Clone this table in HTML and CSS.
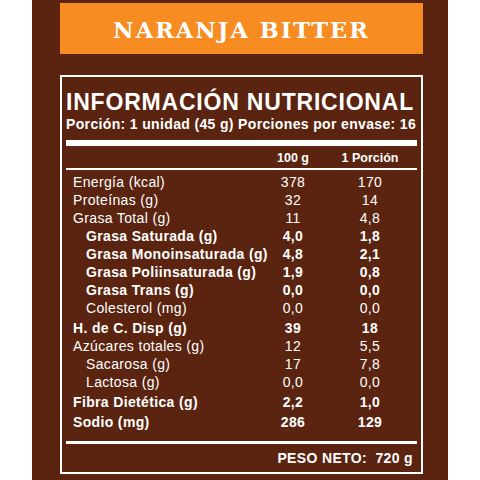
FILE: index.html
```html
<!DOCTYPE html>
<html lang="es">
<head>
  <meta charset="UTF-8">
  <title>Naranja Bitter - Información Nutricional</title>
  <link rel="stylesheet" href="styles.css">
</head>
<body>
<div class="panel">
  <div class="flavor">NARANJA BITTER</div>
  <div class="facts">
    <h1 class="facts-title">INFORMACIÓN NUTRICIONAL</h1>
    <p class="serving">Porción: 1 unidad (45 g) Porciones por envase: 16</p>
    <div class="bar-thick"></div>
    <div class="row head">
      <span></span><span class="val">100 g</span><span class="val">1 Porción</span>
    </div>
    <div class="rows">
      <div class="row"><span class="name">Energía (kcal)</span><span class="val">378</span><span class="val">170</span></div>
      <div class="row"><span class="name">Proteínas (g)</span><span class="val">32</span><span class="val">14</span></div>
      <div class="row"><span class="name">Grasa Total (g)</span><span class="val">11</span><span class="val">4,8</span></div>
      <div class="row sub bold"><span class="name">Grasa Saturada (g)</span><span class="val">4,0</span><span class="val">1,8</span></div>
      <div class="row sub bold"><span class="name">Grasa Monoinsaturada (g)</span><span class="val">4,8</span><span class="val">2,1</span></div>
      <div class="row sub bold"><span class="name">Grasa Poliinsaturada (g)</span><span class="val">1,9</span><span class="val">0,8</span></div>
      <div class="row sub bold"><span class="name">Grasa Trans (g)</span><span class="val">0,0</span><span class="val">0,0</span></div>
      <div class="row sub"><span class="name">Colesterol (mg)</span><span class="val">0,0</span><span class="val">0,0</span></div>
      <div class="row bold gap"><span class="name">H. de C. Disp (g)</span><span class="val">39</span><span class="val">18</span></div>
      <div class="row"><span class="name">Azúcares totales (g)</span><span class="val">12</span><span class="val">5,5</span></div>
      <div class="row sub"><span class="name">Sacarosa (g)</span><span class="val">17</span><span class="val">7,8</span></div>
      <div class="row sub"><span class="name">Lactosa (g)</span><span class="val">0,0</span><span class="val">0,0</span></div>
      <div class="row bold gap"><span class="name">Fibra Dietética (g)</span><span class="val">2,2</span><span class="val">1,0</span></div>
      <div class="row bold gap"><span class="name">Sodio (mg)</span><span class="val">286</span><span class="val">129</span></div>
    </div>
    <div class="bar-base"></div>
    <p class="net">PESO NETO:&nbsp; 720 g</p>
  </div>
</div>
</body>
</html>
```

FILE: styles.css
```css
body {
  margin: 0;
  background: #ffffff;
  font-family: 'Liberation Sans', Arial, sans-serif;
  color: #ffffff;
}
.panel {
  width: 416px;
  height: 480px;
  margin: 0 32px;
  padding-top: 3px;
  box-sizing: border-box;
  background: #5a2410;
}
.flavor {
  height: 51px;
  margin: 0 25px 0 28px;
  background: #f78d22;
  display: flex;
  align-items: center;
  justify-content: center;
  font-family: 'DejaVu Serif', serif;
  font-weight: bold;
  font-size: 22.5px;
  letter-spacing: 2px;
  padding-top: 2px;
  box-sizing: border-box;
}
.facts {
  width: 363px;
  height: 399px;
  margin: 21px 0 0 28px;
  border: 2px solid #ffffff;
  box-sizing: border-box;
  padding: 13px 4px 0 4px;
}
.facts-title {
  margin: 0;
  font-size: 23px;
  line-height: 24px;
  letter-spacing: 0.8px;
  font-weight: bold;
  white-space: nowrap;
}
.serving {
  margin: 2px 0 0 0;
  font-size: 14px;
  line-height: 16px;
  font-weight: bold;
  letter-spacing: 0.35px;
  white-space: nowrap;
}
.bar-thick {
  height: 6px;
  margin-top: 8px;
  background: #ffffff;
}
.row {
  display: grid;
  grid-template-columns: 189px 76px 78px;
  font-size: 14px;
  line-height: 18px;
  letter-spacing: 0.35px;
}
.row .name {
  padding-left: 7px;
  white-space: nowrap;
}
.row .val {
  text-align: center;
}
.row.sub .name {
  padding-left: 20px;
}
.row.bold {
  font-weight: bold;
}
.row.gap {
  margin-top: 2px;
}
.head {
  font-size: 12.5px;
  line-height: 14px;
  font-weight: bold;
  letter-spacing: 0;
  padding: 5px 0 3px 0;
  border-bottom: 2px solid #ffffff;
}
.head .val:first-of-type {
  padding-left: 4px;
}
.rows {
  padding-top: 3px;
}
.bar-base {
  height: 3px;
  margin-top: 10px;
  background: #ffffff;
}
.net {
  margin: 6px 0 0 0;
  padding-right: 4px;
  text-align: right;
  font-size: 14px;
  line-height: 16px;
  font-weight: bold;
  letter-spacing: 0.35px;
}
```
